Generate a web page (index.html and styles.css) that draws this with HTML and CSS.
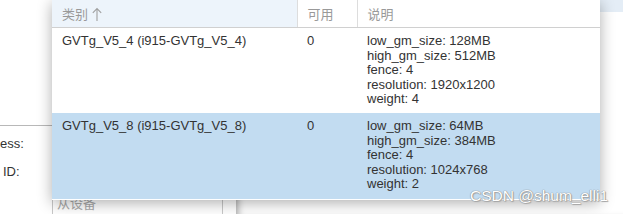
FILE: index.html
```html
<!DOCTYPE html>
<html lang="en">
<head>
    <meta charset="UTF-8">
    <title>mdev types</title>
    <link rel="stylesheet" href="styles.css">
</head>
<body>

<div class="screen">
    <div class="form-panel">
        <div class="form-top"></div>
        <div class="field">ess:</div>
        <div class="field field-id">ID:</div>
        <div class="slave-select">从设备</div>
    </div>
    <div class="dialog">
        <div class="dialog-head"></div>
    </div>

    <div class="dropdown">
        <table class="type-grid">
            <colgroup>
                <col class="col-type">
                <col class="col-avail">
                <col>
            </colgroup>
            <thead>
                <tr>
                    <th class="sorted">类别 <svg class="sort-arrow" width="10" height="14" viewBox="0 0 10 14"><path d="M5 1.5V14M0.8 5.8L5 1.5L9.2 5.8" fill="none" stroke="#a0a0a0" stroke-width="1.1"/></svg></th>
                    <th>可用</th>
                    <th>说明</th>
                </tr>
            </thead>
            <tbody>
                <tr>
                    <td>GVTg_V5_4 (i915-GVTg_V5_4)</td>
                    <td>0</td>
                    <td>low_gm_size: 128MB<br>high_gm_size: 512MB<br>fence: 4<br>resolution: 1920x1200<br>weight: 4</td>
                </tr>
                <tr class="selected">
                    <td>GVTg_V5_8 (i915-GVTg_V5_8)</td>
                    <td>0</td>
                    <td>low_gm_size: 64MB<br>high_gm_size: 384MB<br>fence: 4<br>resolution: 1024x768<br>weight: 2</td>
                </tr>
            </tbody>
        </table>
    </div>

    <div class="watermark">CSDN @shum_elli1</div>
</div>

</body>
</html>
```

FILE: styles.css
```css
body {
    margin: 0;
    padding: 0;
    background-color: #fff;
    font-family: 'Liberation Sans', Arial, 'Noto Sans CJK SC', sans-serif;
    font-size: 13px;
    color: #333;
}
.screen {
    position: relative;
    width: 623px;
    height: 214px;
    overflow: hidden;
    display: flex;
}
.form-panel {
    width: 236px;
    flex-shrink: 0;
    background-color: #fff;
}
.form-top {
    height: 125px;
    border-bottom: 1px solid #b8b8b8;
}
.field {
    height: 28px;
    line-height: 28px;
    margin-top: 4px;
    margin-bottom: -4px;
}
.field-id {
    padding-left: 3px;
}
.slave-select {
    margin: 8px 0 0 52px;
    width: 165px;
    height: 26px;
    line-height: 26px;
    padding-left: 4px;
    border: 1px solid #c8c8c8;
    color: #aaa;
}
.dialog {
    flex: 1;
    background-color: #fff;
    box-shadow: inset 7px 0 7px -5px rgba(0, 0, 0, 0.35);
}
.dialog-head {
    height: 12px;
    background-color: #e4edf6;
}
.dropdown {
    position: absolute;
    left: 52px;
    top: 0;
    width: 548px;
    height: 200px;
    background-color: #fff;
    box-shadow: 0 3px 14px rgba(0, 0, 0, 0.32);
}
.type-grid {
    width: 100%;
    border-collapse: collapse;
    table-layout: fixed;
}
.type-grid .col-type {
    width: 245px;
}
.type-grid .col-avail {
    width: 60px;
}
.type-grid th {
    height: 27px;
    padding: 0 0 0 10px;
    text-align: left;
    font-weight: normal;
    color: #999;
    border-bottom: 1px solid #d0d0d0;
    border-left: 1px solid #ddd;
}
.type-grid th:first-child {
    border-left: none;
}
.type-grid th.sorted {
    background-color: #edf4fb;
}
.sort-arrow {
    vertical-align: -2px;
}
.type-grid td {
    padding: 6px 0 6px 10px;
    vertical-align: top;
    line-height: 14.6px;
    color: #333;
}
.type-grid tr.selected td {
    background-color: #c2dcf1;
    padding-bottom: 7px;
}
.watermark {
    position: absolute;
    left: 470px;
    top: 187px;
    font-size: 15.5px;
    color: #fff;
    text-shadow: 0 0 1px #888, 0 0 1px #888, 1px 1px 1px #aaa;
}
```
